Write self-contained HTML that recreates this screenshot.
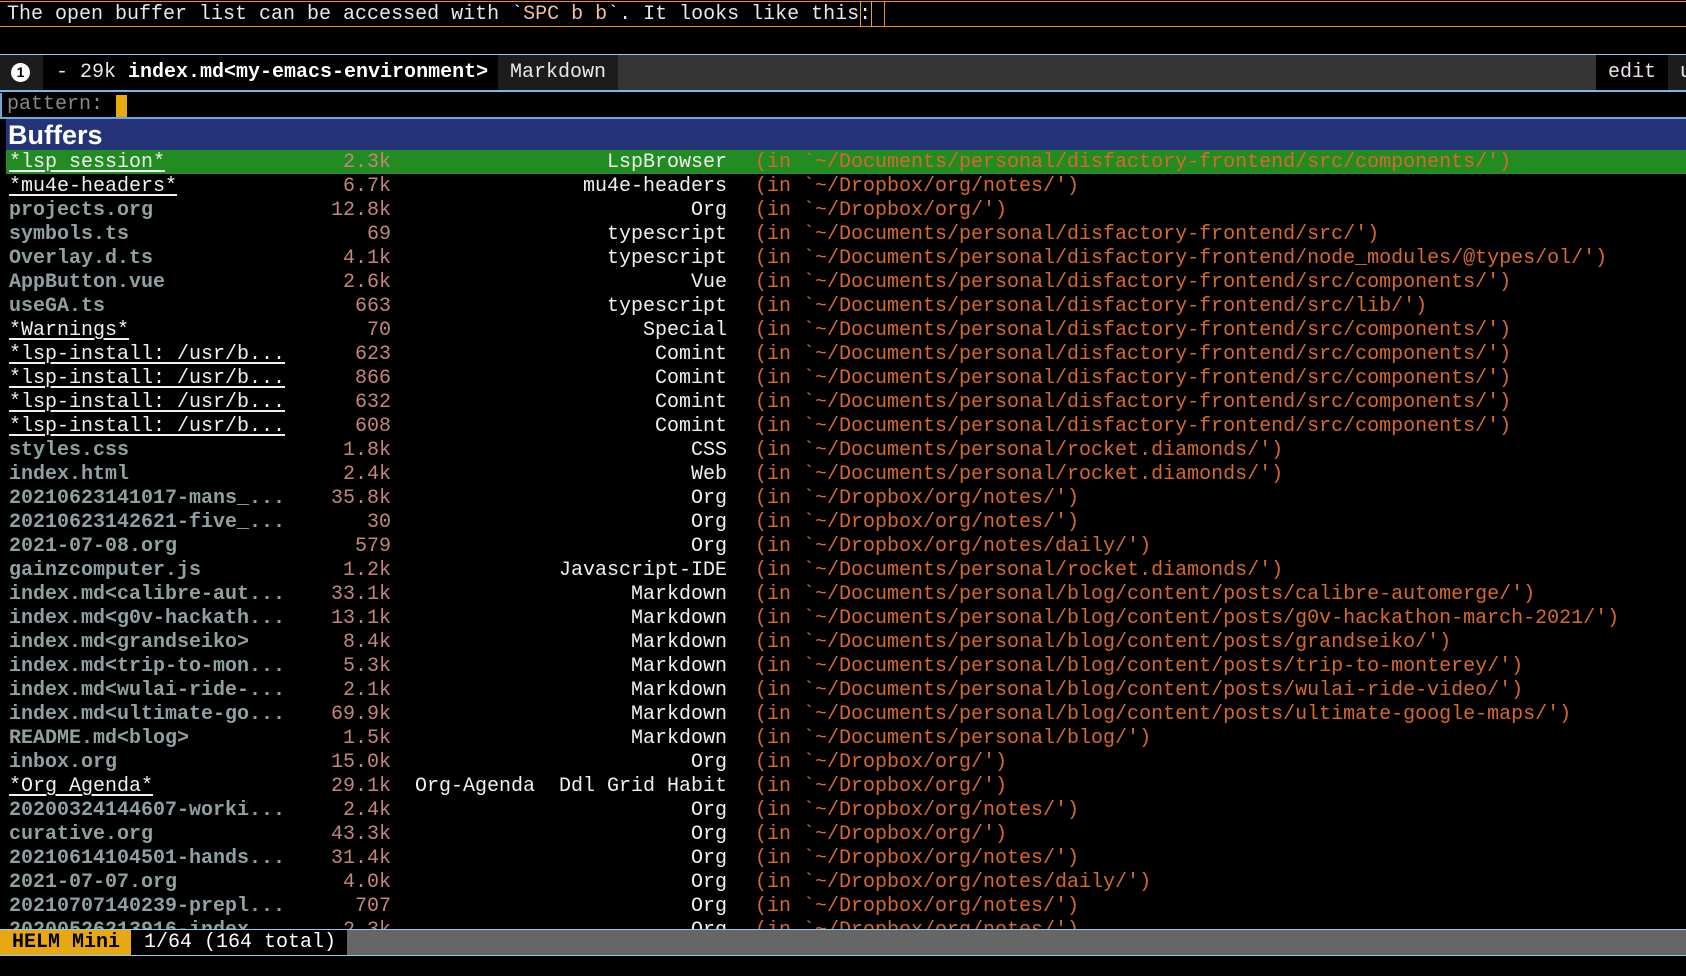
<!DOCTYPE html>
<html><head><meta charset="utf-8"><style>
*{margin:0;padding:0;box-sizing:border-box}
body{width:1686px;height:976px;background:#000;overflow:hidden;position:relative;font-family:"Liberation Mono",monospace;font-size:20px;color:#e8e8e8}
.abs{position:absolute;white-space:pre;line-height:24px}
.row{position:absolute;left:0;width:1686px;height:24px}
.row span{position:absolute;top:1px;line-height:24px;white-space:pre}
.n{left:9px;color:#8fa0a0;font-weight:bold}
.u{left:9px;color:#f0f0f0;text-decoration:underline;text-underline-offset:3px}
.s{right:1295px;color:#c4857a}
.m{right:959px;color:#f0f0f0}
.p{left:755px;color:#d66a2c}
</style></head><body>
<div style="position:absolute;left:0;top:1px;width:1686px;height:1px;background:#f08a1c"></div>
<div style="position:absolute;left:0;top:26px;width:1686px;height:1px;background:#f08a1c"></div>
<div class="abs" style="left:7px;top:3px">The open buffer list can be accessed with `<span style="color:#f0c0a0">SPC b b</span>`. It looks like this:</div>
<div style="position:absolute;left:860px;top:2px;width:12px;height:24px;border:1px solid #e8a812;border-top:none;border-bottom:none"></div>
<div style="position:absolute;left:884px;top:2px;width:1px;height:24px;background:#f08a1c"></div>
<div style="position:absolute;left:0;top:54px;width:1686px;height:38px;background:#343434;border-top:1px solid #8ecdf0;border-bottom:2px solid #7ab6e6"></div>
<div style="position:absolute;left:0;top:55px;width:43px;height:35px;background:#1c1c1c"></div>
<div style="position:absolute;left:11px;top:63px;width:19px;height:19px;border-radius:50%;background:#fff;color:#000;font:bold 14px 'Liberation Sans',sans-serif;text-align:center;line-height:19px">1</div>
<div style="position:absolute;left:43px;top:55px;width:455px;height:35px;background:#000"></div>
<div class="abs" style="left:56px;top:61px">- 29k <b style="color:#fff">index.md&lt;my-emacs-environment&gt;</b></div>
<div style="position:absolute;left:498px;top:55px;width:120px;height:35px;background:#1c1c1c"></div>
<div class="abs" style="left:510px;top:61px">Markdown</div>
<div style="position:absolute;left:1596px;top:55px;width:72px;height:35px;background:#000"></div>
<div class="abs" style="left:1608px;top:61px;color:#f0e0f0">edit</div>
<div style="position:absolute;left:1668px;top:55px;width:18px;height:35px;background:#1c1c1c"></div>
<div class="abs" style="left:1680px;top:61px">u</div>
<div style="position:absolute;left:0;top:93px;width:1686px;height:26px;border-left:2px solid #6aa8dc;border-bottom:2px solid #6aa8dc"></div>
<div class="abs" style="left:7px;top:93px;color:#888">pattern:</div>
<div style="position:absolute;left:116px;top:95px;width:11px;height:22px;background:#e8a812"></div>
<div style="position:absolute;left:6px;top:119px;width:1680px;height:31px;background:#253479"></div>
<div class="abs" style="left:8px;top:120px;font:bold 27px 'Liberation Sans',sans-serif;color:#fff;line-height:30px">Buffers</div>
<div style="position:absolute;left:6px;top:150px;width:1680px;height:24px;background:#228b22"></div>
<div style="position:absolute;left:0;top:150px;width:1686px">
<div class="row" style="top:0px"><span class="u">*lsp session*</span><span class="s">2.3k</span><span class="m">LspBrowser</span><span class="p">(in `~/Documents/personal/disfactory-frontend/src/components/')</span></div>
<div class="row" style="top:24px"><span class="u">*mu4e-headers*</span><span class="s">6.7k</span><span class="m">mu4e-headers</span><span class="p">(in `~/Dropbox/org/notes/')</span></div>
<div class="row" style="top:48px"><span class="n">projects.org</span><span class="s">12.8k</span><span class="m">Org</span><span class="p">(in `~/Dropbox/org/')</span></div>
<div class="row" style="top:72px"><span class="n">symbols.ts</span><span class="s">69</span><span class="m">typescript</span><span class="p">(in `~/Documents/personal/disfactory-frontend/src/')</span></div>
<div class="row" style="top:96px"><span class="n">Overlay.d.ts</span><span class="s">4.1k</span><span class="m">typescript</span><span class="p">(in `~/Documents/personal/disfactory-frontend/node_modules/@types/ol/')</span></div>
<div class="row" style="top:120px"><span class="n">AppButton.vue</span><span class="s">2.6k</span><span class="m">Vue</span><span class="p">(in `~/Documents/personal/disfactory-frontend/src/components/')</span></div>
<div class="row" style="top:144px"><span class="n">useGA.ts</span><span class="s">663</span><span class="m">typescript</span><span class="p">(in `~/Documents/personal/disfactory-frontend/src/lib/')</span></div>
<div class="row" style="top:168px"><span class="u">*Warnings*</span><span class="s">70</span><span class="m">Special</span><span class="p">(in `~/Documents/personal/disfactory-frontend/src/components/')</span></div>
<div class="row" style="top:192px"><span class="u">*lsp-install: /usr/b...</span><span class="s">623</span><span class="m">Comint</span><span class="p">(in `~/Documents/personal/disfactory-frontend/src/components/')</span></div>
<div class="row" style="top:216px"><span class="u">*lsp-install: /usr/b...</span><span class="s">866</span><span class="m">Comint</span><span class="p">(in `~/Documents/personal/disfactory-frontend/src/components/')</span></div>
<div class="row" style="top:240px"><span class="u">*lsp-install: /usr/b...</span><span class="s">632</span><span class="m">Comint</span><span class="p">(in `~/Documents/personal/disfactory-frontend/src/components/')</span></div>
<div class="row" style="top:264px"><span class="u">*lsp-install: /usr/b...</span><span class="s">608</span><span class="m">Comint</span><span class="p">(in `~/Documents/personal/disfactory-frontend/src/components/')</span></div>
<div class="row" style="top:288px"><span class="n">styles.css</span><span class="s">1.8k</span><span class="m">CSS</span><span class="p">(in `~/Documents/personal/rocket.diamonds/')</span></div>
<div class="row" style="top:312px"><span class="n">index.html</span><span class="s">2.4k</span><span class="m">Web</span><span class="p">(in `~/Documents/personal/rocket.diamonds/')</span></div>
<div class="row" style="top:336px"><span class="n">20210623141017-mans_...</span><span class="s">35.8k</span><span class="m">Org</span><span class="p">(in `~/Dropbox/org/notes/')</span></div>
<div class="row" style="top:360px"><span class="n">20210623142621-five_...</span><span class="s">30</span><span class="m">Org</span><span class="p">(in `~/Dropbox/org/notes/')</span></div>
<div class="row" style="top:384px"><span class="n">2021-07-08.org</span><span class="s">579</span><span class="m">Org</span><span class="p">(in `~/Dropbox/org/notes/daily/')</span></div>
<div class="row" style="top:408px"><span class="n">gainzcomputer.js</span><span class="s">1.2k</span><span class="m">Javascript-IDE</span><span class="p">(in `~/Documents/personal/rocket.diamonds/')</span></div>
<div class="row" style="top:432px"><span class="n">index.md&lt;calibre-aut...</span><span class="s">33.1k</span><span class="m">Markdown</span><span class="p">(in `~/Documents/personal/blog/content/posts/calibre-automerge/')</span></div>
<div class="row" style="top:456px"><span class="n">index.md&lt;g0v-hackath...</span><span class="s">13.1k</span><span class="m">Markdown</span><span class="p">(in `~/Documents/personal/blog/content/posts/g0v-hackathon-march-2021/')</span></div>
<div class="row" style="top:480px"><span class="n">index.md&lt;grandseiko&gt;</span><span class="s">8.4k</span><span class="m">Markdown</span><span class="p">(in `~/Documents/personal/blog/content/posts/grandseiko/')</span></div>
<div class="row" style="top:504px"><span class="n">index.md&lt;trip-to-mon...</span><span class="s">5.3k</span><span class="m">Markdown</span><span class="p">(in `~/Documents/personal/blog/content/posts/trip-to-monterey/')</span></div>
<div class="row" style="top:528px"><span class="n">index.md&lt;wulai-ride-...</span><span class="s">2.1k</span><span class="m">Markdown</span><span class="p">(in `~/Documents/personal/blog/content/posts/wulai-ride-video/')</span></div>
<div class="row" style="top:552px"><span class="n">index.md&lt;ultimate-go...</span><span class="s">69.9k</span><span class="m">Markdown</span><span class="p">(in `~/Documents/personal/blog/content/posts/ultimate-google-maps/')</span></div>
<div class="row" style="top:576px"><span class="n">README.md&lt;blog&gt;</span><span class="s">1.5k</span><span class="m">Markdown</span><span class="p">(in `~/Documents/personal/blog/')</span></div>
<div class="row" style="top:600px"><span class="n">inbox.org</span><span class="s">15.0k</span><span class="m">Org</span><span class="p">(in `~/Dropbox/org/')</span></div>
<div class="row" style="top:624px"><span class="u">*Org Agenda*</span><span class="s">29.1k</span><span class="m">Org-Agenda  Ddl Grid Habit</span><span class="p">(in `~/Dropbox/org/')</span></div>
<div class="row" style="top:648px"><span class="n">20200324144607-worki...</span><span class="s">2.4k</span><span class="m">Org</span><span class="p">(in `~/Dropbox/org/notes/')</span></div>
<div class="row" style="top:672px"><span class="n">curative.org</span><span class="s">43.3k</span><span class="m">Org</span><span class="p">(in `~/Dropbox/org/')</span></div>
<div class="row" style="top:696px"><span class="n">20210614104501-hands...</span><span class="s">31.4k</span><span class="m">Org</span><span class="p">(in `~/Dropbox/org/notes/')</span></div>
<div class="row" style="top:720px"><span class="n">2021-07-07.org</span><span class="s">4.0k</span><span class="m">Org</span><span class="p">(in `~/Dropbox/org/notes/daily/')</span></div>
<div class="row" style="top:744px"><span class="n">20210707140239-prepl...</span><span class="s">707</span><span class="m">Org</span><span class="p">(in `~/Dropbox/org/notes/')</span></div>
<div class="row" style="top:768px"><span class="n">20200526213916-index...</span><span class="s">2.3k</span><span class="m">Org</span><span class="p">(in `~/Dropbox/org/notes/')</span></div>
</div>
<div style="position:absolute;left:0;top:929px;width:1686px;height:27px;background:#666;border-top:1px solid #8ecdf0;border-bottom:1px solid #8ecdf0"></div>
<div style="position:absolute;left:0;top:930px;width:131px;height:25px;background:#e8a812"></div>
<div class="abs" style="left:12px;top:931px;color:#000;font-weight:bold">HELM Mini</div>
<div style="position:absolute;left:131px;top:930px;width:216px;height:25px;background:#000"></div>
<div class="abs" style="left:144px;top:931px;color:#fff">1/64 (164 total)</div>
</body></html>
